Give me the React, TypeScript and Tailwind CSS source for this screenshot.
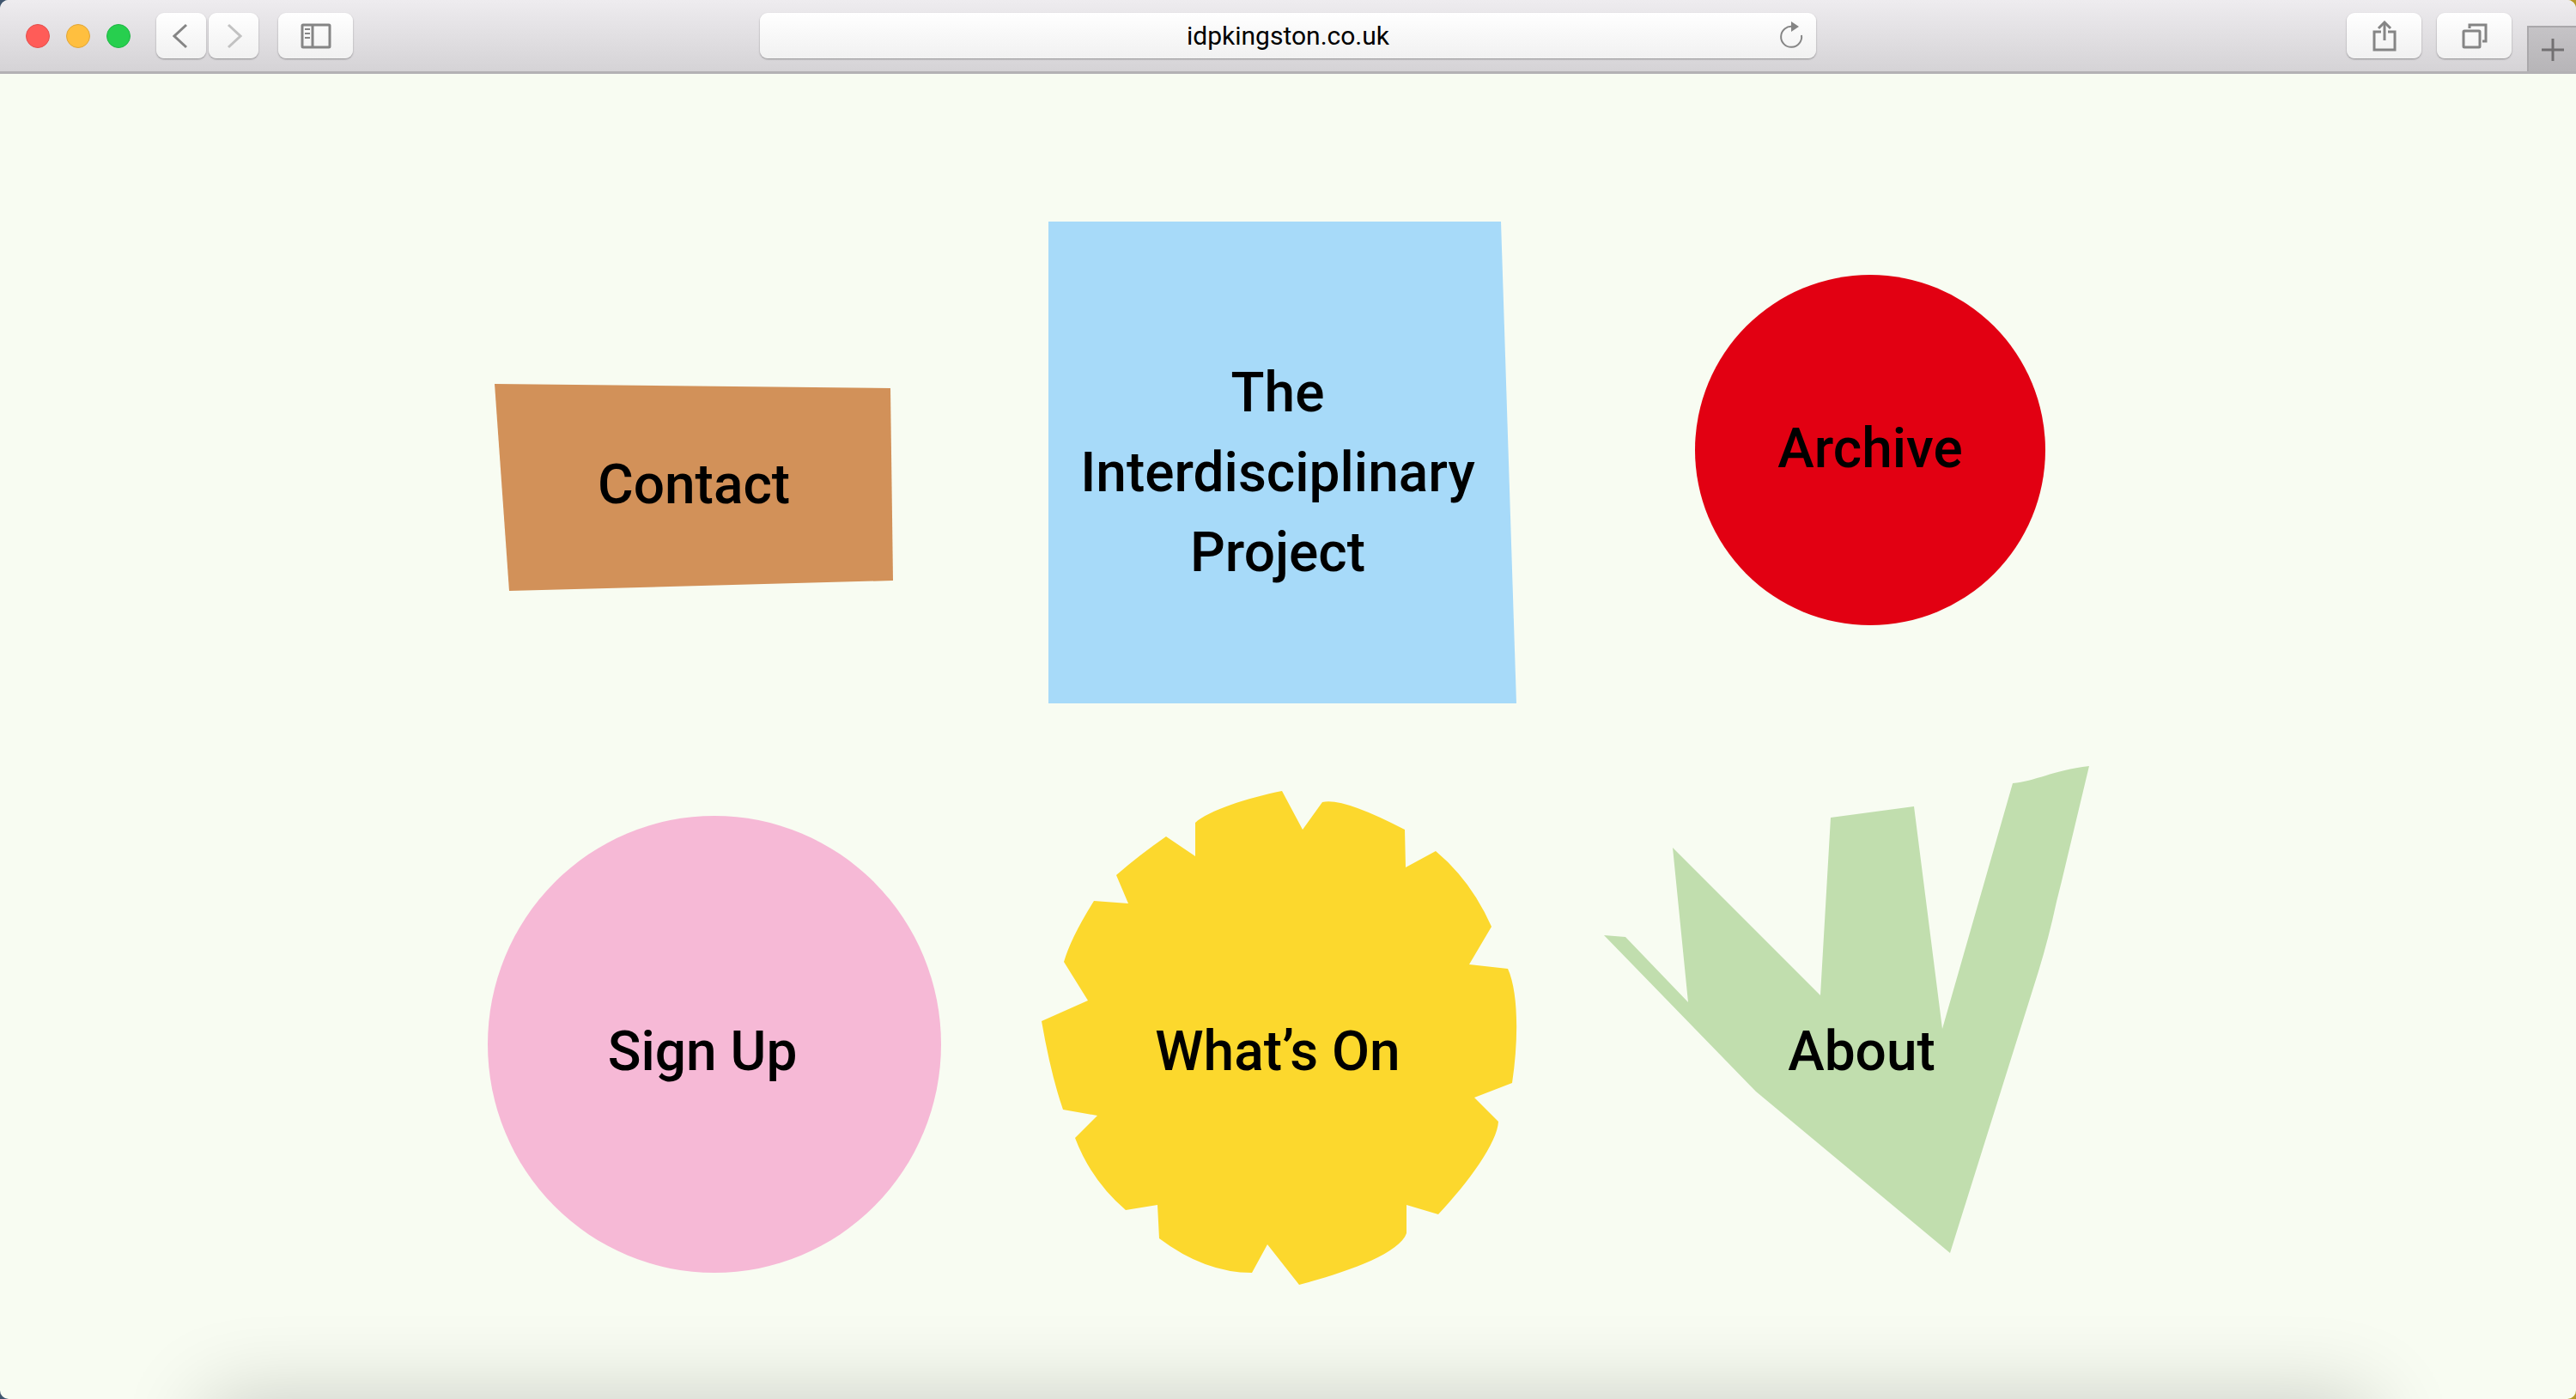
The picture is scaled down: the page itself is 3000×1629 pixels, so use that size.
import React from "react";

type Tile = {
  lines: string[];
  href: string;
  labelClass: string;
  shape: React.ReactNode;
};

const tiles: Tile[] = [
  {
    lines: ["Contact"],
    href: "#contact",
    labelClass: "pr-16 pt-12",
    shape: <path fill="#d29159" d="M36 217 497 222 500 446 53 458Z" />,
  },
  {
    lines: ["The", "Interdisciplinary", "Project"],
    href: "#project",
    labelClass: "pr-6 pt-5",
    shape: <path fill="#a7daf9" d="M21 28H548L566 589H21Z" />,
  },
  {
    lines: ["Archive"],
    href: "#archive",
    labelClass: "pl-9 pb-9",
    shape: <circle fill="#e20012" cx="318" cy="294" r="204" />,
  },
  {
    lines: ["Sign Up"],
    href: "#sign-up",
    labelClass: "pr-11 pt-17",
    shape: <ellipse fill="#f6b9d6" cx="292" cy="336" rx="264" ry="266" />,
  },
  {
    lines: ["What’s On"],
    href: "#whats-on",
    labelClass: "pr-6 pt-17",
    shape: (
      <path
        fill="#fcd82d"
        d="M293 41 317 86 340 54Q363 48 436 86L437 130 472 111Q513 145 537 199L511 243 556 248C568 274 569 328 561 381L517 398 545 426C544 450 510 497 475 534L438 523V556C430 580 366 602 313 616L276 569 258 602Q203 602 150 562L148 523 111 529Q71 495 52 445L78 419 38 412Q24 372 13 309L67 285 39 240Q47 212 74 169L114 172 100 139Q125 117 158 94L192 117V78C207 64 253 49 293 41Z"
      />
    ),
  },
  {
    lines: ["About"],
    href: "#about",
    labelClass: "pl-4 pt-17",
    shape: (
      <path
        fill="#c1deae"
        d="M8 209 33 211 106 287 88 107 260 279 272 72 369 59 402 318 484 32C510 30 530 17 573 12L541 146 535 170Q526 212 514 251L411 579 185 391Z"
      />
    ),
  },
];

const toolButton =
  "flex h-[53px] items-center justify-center rounded-[9px] bg-linear-to-b from-white to-[#f1f1f1] text-[#858585] shadow-[0_1px_2px_rgba(0,0,0,0.35)]";

const Toolbar = () => {
  return (
    <header className="grid h-[86px] grid-cols-[1fr_41%_1fr] border-b-3 border-[#b3b1b4] bg-linear-to-b from-[#eeecef] to-[#d5d3d6]">
      <div className="flex items-center pl-[30px]">
        <div className="flex gap-[19px]">
          <button aria-label="Close" className="size-7 rounded-full border border-[#e2504d] bg-[#ff5c58]" />
          <button aria-label="Minimise" className="size-7 rounded-full border border-[#e0a63a] bg-[#ffbf3f]" />
          <button aria-label="Zoom" className="size-7 rounded-full border border-[#1fb545] bg-[#27cf4e]" />
        </div>
        <div className="ml-[30px] flex gap-[3px]">
          <button aria-label="Back" className={`${toolButton} w-[58px]`}>
            <svg width="20" height="30" viewBox="0 0 20 30" fill="none" stroke="currentColor" strokeWidth="3">
              <path d="M16 2 2 15 16 28" />
            </svg>
          </button>
          <button aria-label="Forward" className={`${toolButton} w-[58px]`}>
            <svg width="20" height="30" viewBox="0 0 20 30" fill="none" stroke="#c2c2c2" strokeWidth="3">
              <path d="M4 2 18 15 4 28" />
            </svg>
          </button>
        </div>
        <button aria-label="Show sidebar" className={`${toolButton} ml-[23px] w-[87px]`}>
          <svg width="36" height="30" viewBox="0 0 36 30" fill="none" stroke="currentColor" strokeWidth="3">
            <rect x="2" y="2" width="32" height="26" rx="1" />
            <path d="M14 2V28" />
            <path d="M5 7H11M5 12H11M5 17H11" strokeWidth="2" />
          </svg>
        </button>
      </div>

      <div className="relative flex items-center">
        <input
          aria-label="Address"
          defaultValue="idpkingston.co.uk"
          className="h-[53px] w-full rounded-[9px] bg-linear-to-b from-white to-[#f1f1f1] text-center font-[Roboto,sans-serif] text-[30px] text-black shadow-[0_1px_2px_rgba(0,0,0,0.35)] outline-none"
        />
        <button aria-label="Reload" className="absolute right-[14px] text-[#858585]">
          <svg width="30" height="34" viewBox="0 0 30 34" fill="none" stroke="currentColor" strokeWidth="2">
            <path d="M17 6A12 12 0 1 0 27 16" />
            <path d="M15 0 24 6 15 12Z" fill="currentColor" stroke="none" />
          </svg>
        </button>
      </div>

      <div className="flex items-center justify-end">
        <button aria-label="Share" className={`${toolButton} w-[87px]`}>
          <svg width="28" height="36" viewBox="0 0 28 36" fill="none" stroke="currentColor" strokeWidth="3">
            <path d="M10 13H2V34H26V13H18" />
            <path d="M14 23V3" />
            <path d="M7 9 14 2 21 9" />
          </svg>
        </button>
        <button aria-label="Show all tabs" className={`${toolButton} ml-[18px] w-[87px]`}>
          <svg width="30" height="30" viewBox="0 0 30 30" fill="none" stroke="currentColor" strokeWidth="3">
            <rect x="2" y="9" width="19" height="19" rx="1" />
            <path d="M9 6V2H28V21H24" />
          </svg>
        </button>
        <button
          aria-label="New tab"
          className="ml-[18px] flex h-[53px] w-[57px] items-center justify-center self-end border-t-2 border-l-2 border-[#aaa8ab] bg-linear-to-b from-[#c5c3c6] to-[#b7b5b8] text-[#727072]"
        >
          <svg width="28" height="28" viewBox="0 0 28 28" fill="none" stroke="currentColor" strokeWidth="3">
            <path d="M14 1V27M1 14H27" />
          </svg>
        </button>
      </div>
    </header>
  );
};

const App = () => {
  return (
    <div className="bg-linear-to-r from-[#40566f] to-[#b89a2c]">
      <div className="flex min-h-screen flex-col overflow-hidden rounded-[10px] bg-[#f8fcf2]">
        <Toolbar />
        <main className="relative flex-1 overflow-hidden pt-36">
          <nav className="mx-auto grid w-[64%] grid-cols-3 gap-x-[60px] gap-y-[30px]">
            {tiles.map((tile) => (
              <a key={tile.href} href={tile.href} className="grid">
                <svg viewBox="0 0 600 620" className="col-start-1 row-start-1 w-full">
                  {tile.shape}
                </svg>
                <span
                  className={`col-start-1 row-start-1 flex flex-col items-center justify-center font-[Roboto,sans-serif] text-[64px] leading-[93px] font-medium text-black ${tile.labelClass}`}
                >
                  {tile.lines.map((line) => (
                    <span key={line}>{line}</span>
                  ))}
                </span>
              </a>
            ))}
          </nav>
          {/* soft shadow rising from below the window */}
          <div className="absolute top-full right-[8%] left-[8%] h-40 shadow-[0_0_100px_rgba(0,0,0,0.2)]" />
        </main>
      </div>
    </div>
  );
};

export default App;
